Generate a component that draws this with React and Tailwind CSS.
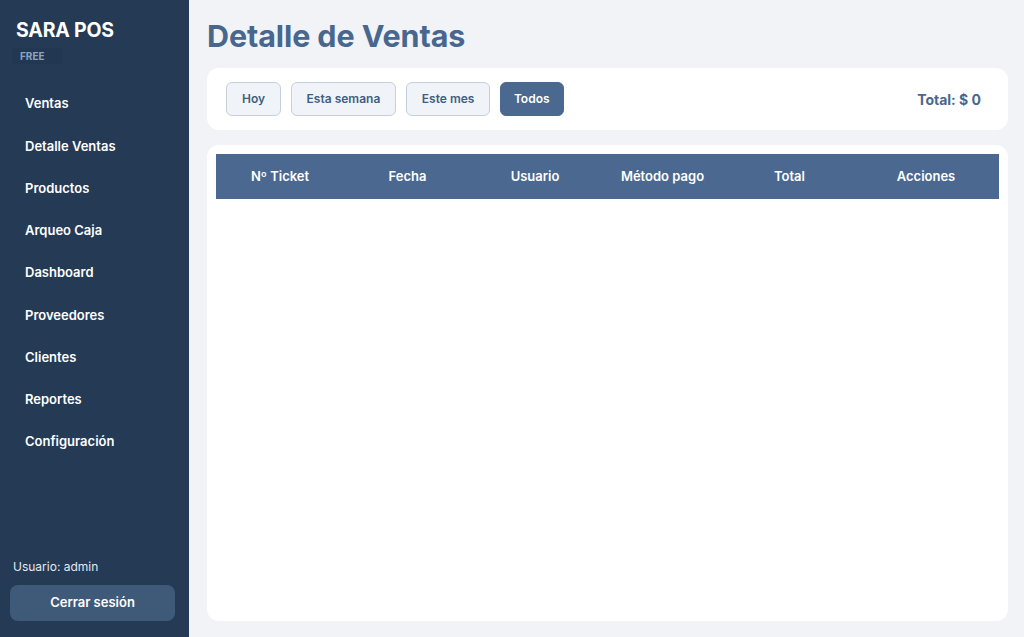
import * as React from "react";

const navItems = [
  "Ventas",
  "Detalle Ventas",
  "Productos",
  "Arqueo Caja",
  "Dashboard",
  "Proveedores",
  "Clientes",
  "Reportes",
  "Configuración",
];

const filters = ["Hoy", "Esta semana", "Este mes", "Todos"];

// fixed widths so the header labels sit where the reference puts them
const columns = [
  { label: "Nº Ticket", w: "w-[128px]" },
  { label: "Fecha", w: "w-[127px]" },
  { label: "Usuario", w: "w-[128px]" },
  { label: "Método pago", w: "w-[127px]" },
  { label: "Total", w: "w-[127px]" },
  { label: "Acciones", w: "w-[146px]" },
];

function Sidebar() {
  return (
    <aside className="flex flex-col w-[189px] shrink-0 h-full bg-[#243a55] text-white">
      <div className="pl-4 pt-[18px]">
        <div className="text-[19.5px] font-bold leading-6 tracking-[-0.2px]">SARA POS</div>
        <div className="mt-[6px] -ml-1 w-[51px] h-4 flex items-center pl-2 rounded-sm bg-[#223752] text-[10px] font-bold text-[#8ea3bf]">
          FREE
        </div>
      </div>

      <nav className="flex flex-col mt-[19px] pl-[25px]">
        {navItems.map((item) => (
          <div key={item} className="h-[42.25px] flex items-center text-[13px] font-semibold">
            {item}
          </div>
        ))}
      </nav>

      <div className="mt-auto px-[10px] pb-4">
        <div className="pl-[3px] text-[12px] text-[#e5eaf0]">Usuario: admin</div>
        <button className="mt-[9px] w-[165px] h-9 rounded-lg bg-[#3f5a78] text-[13px] font-semibold">
          Cerrar sesión
        </button>
      </div>
    </aside>
  );
}

export default function App() {
  const [active, setActive] = React.useState("Todos");

  return (
    <div className="flex w-[1024px] h-[637px] overflow-hidden font-['Inter',sans-serif] bg-[#f1f3f6]">
      <Sidebar />

      <main className="flex flex-col flex-1 pl-[18px] pr-4 pt-[18px] pb-4">
        <h1 className="text-[30.5px] font-bold leading-9 text-[#48678f] tracking-[-0.1px]">Detalle de Ventas</h1>

        {/* Filter bar */}
        <div className="flex items-center justify-between mt-[14px] h-[62px] px-[19px] rounded-xl bg-white">
          <div className="flex gap-[9.5px]">
            {filters.map((f) =>
              f === active ? (
                <button
                  key={f}
                  onClick={() => setActive(f)}
                  className="h-[34px] px-[13px] rounded-md bg-[#4a6890] text-white text-[12px] font-semibold border border-[#4a6890]"
                >
                  {f}
                </button>
              ) : (
                <button
                  key={f}
                  onClick={() => setActive(f)}
                  className="h-[34px] px-[15px] rounded-md bg-[#f0f4f8] text-[#415d80] text-[12px] font-semibold border border-[#c6d0dc]"
                >
                  {f}
                </button>
              )
            )}
          </div>
          <div className="pr-2 text-[14px] font-bold text-[#48678f]">Total: $ 0</div>
        </div>

        {/* Table */}
        <div className="flex-1 mt-[15px] p-[9px] rounded-xl bg-white">
          <table className="w-full table-fixed border-collapse">
            <thead>
              <tr className="h-[45px] bg-[#4a6890] text-white text-[13px]">
                {columns.map((c) => (
                  <th key={c.label} className={`${c.w} font-semibold text-center`}>
                    {c.label}
                  </th>
                ))}
              </tr>
            </thead>
            <tbody></tbody>
          </table>
        </div>
      </main>
    </div>
  );
}
